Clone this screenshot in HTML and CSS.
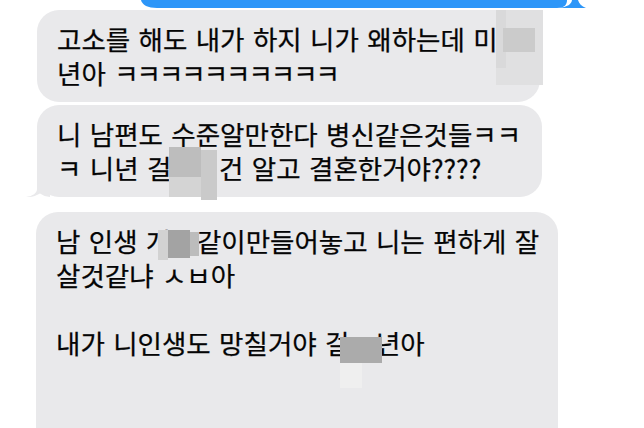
FILE: index.html
```html
<!DOCTYPE html>
<html lang="ko">
<head>
<meta charset="utf-8">
<title>Messages</title>
<link rel="stylesheet" href="styles.css">
</head>
<body>
<div class="thread">
  <svg class="sent" viewBox="0 0 450 9" width="450" height="9"><path d="M1 0 L427 0 C427 5 424 8 417 8 L17 8 C8 8 2 5 1 0 Z"/><path d="M432 0 H438 C439 3.5 441.5 6.5 446 8 L418 8 C428 7 431.5 4 432 0 Z"/></svg>
  <div class="msg recv b1">고소를 해도 내가 하지 니가 왜하는데 미<span class="redact"><span class="tile r1a"></span><span class="tile r1b"></span><span class="tile r1c"></span></span><br>년아 <span class="laugh">ㅋㅋㅋㅋㅋㅋㅋㅋㅋㅋ</span></div>
  <div class="msg recv b2">니 남편도 수준알만한다 병신같은것들ㅋㅋ<br>ㅋ 니년 걸<span class="redact wide"><span class="tile r2a"></span><span class="tile r2b"></span><span class="tile r2c"></span></span>건 알고 결혼한거야????<svg class="tail tail-recv" viewBox="0 0 24 22" width="24" height="22"><path d="M11 0 V14 C11 18 7 21 0 22 C5 22.3 10 21 14 18.5 C17 20.5 20 21.7 24 22 V0 Z"/></svg></div>
  <div class="msg recv b3">남 인생 개<span class="redact"><span class="tile r3a"></span><span class="tile r3b"></span><span class="tile r3c"></span></span>같이만들어놓고 니는 편하게 잘<br>살것같냐 ㅅㅂ아<br><br>내가 니인생도 망칠거야 걸<span class="redact"><span class="tile r4a"></span><span class="tile r4b"></span></span>년아</div>
</div>
</body>
</html>
```

FILE: styles.css
```css
html, body {
  margin: 0;
  padding: 0;
}

body {
  width: 644px;
  height: 428px;
  overflow: hidden;
  background: #ffffff;
  color: #050505;
  font-family: "Noto Sans CJK KR", "Noto Sans", sans-serif;
  font-size: 26.5px;
  line-height: 34px;
  word-spacing: 1px;
  -webkit-text-stroke: 0.25px #050505;
}

.thread {
  display: flex;
  flex-direction: column;
  align-items: flex-start;
  padding-left: 37px;
}

.msg {
  position: relative;
  box-sizing: border-box;
}

.sent {
  display: block;
  flex: none;
  margin-left: 103px;
  fill: #2d96f8;
}

.tail {
  position: absolute;
  bottom: 0;
  display: block;
}

.tail-recv {
  left: -11px;
  fill: #e9e9eb;
}

.recv {
  background: #e9e9eb;
  border-radius: 22px;
  padding: 12px 20px;
  white-space: nowrap;
}

.laugh {
  letter-spacing: -2px;
}

.b1 {
  margin-top: 1px;
  width: 503px;
}

.b2 {
  margin-top: 3px;
  width: 505px;
}

.b3 {
  margin-top: 15px;
  margin-left: -1px;
  width: 522px;
  padding-bottom: 90px;
}

.redact {
  display: inline-block;
  position: relative;
  width: 1em;
  height: 0;
  vertical-align: baseline;
}

.redact.wide {
  width: 1.8em;
}

.tile {
  position: absolute;
  display: block;
}

.r1a { left: -2px; top: -40px; width: 47px; height: 75px; background: #e0e0e1; }
.r1b { left: -2px; top: -40px; width: 10px; height: 58px; background: #d9d9da; }
.r1c { left: 5px; top: -22px; width: 32px; height: 24px; background: #cbcbcb; }

.r2a { left: -2px; top: -32px; width: 32px; height: 30px; background: #bdbdbd; }
.r2b { left: 30px; top: -29px; width: 16px; height: 50px; background: #cacaca; }
.r2c { left: -2px; top: -2px; width: 32px; height: 20px; background: #d4d4d4; }

.r3a { left: -12px; top: -22px; width: 10px; height: 30px; background: #d2d2d2; }
.r3b { left: -2px; top: -22px; width: 22px; height: 28px; background: #a3a3a3; }
.r3c { left: 20px; top: -20px; width: 9px; height: 24px; background: #bcbcbc; }
.r4a { left: -9px; top: -17px; width: 42px; height: 26px; background: #ababab; }
.r4b { left: -9px; top: 9px; width: 22px; height: 25px; background: #efefef; }
```
